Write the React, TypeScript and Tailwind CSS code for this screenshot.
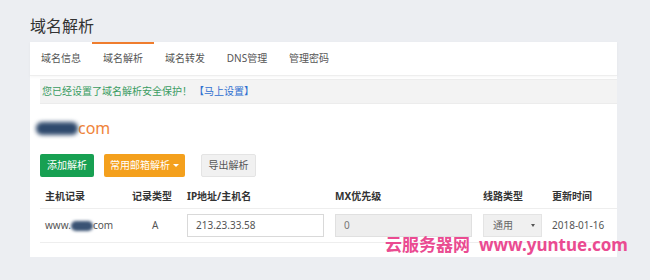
import React from "react";

const font = { fontFamily: '"Noto Sans", "Noto Sans CJK SC", sans-serif' };

const tabs = ["域名信息", "域名解析", "域名转发", "DNS管理", "管理密码"];

const Blur = ({ w }: { w: string }) => (
  <span className={`inline-block ${w} h-[10px] rounded-full bg-[#3a5374] blur-[1.5px] align-middle`}></span>
);

const App = () => {
  return (
    <div className="w-[650px] h-[280px] bg-[#eceef2] pl-[30px] pt-[15px] overflow-hidden" style={font}>
      <h1 className="text-[16px] leading-[22px] text-[#333] h-[27px]">域名解析</h1>

      <div className="relative w-[587px] bg-white pb-[14px]">
        {/* tabs */}
        <div className="flex h-[34px] border-b border-[#eeeeee] shadow-[0_1px_3px_rgba(0,0,0,0.04)]">
          {tabs.map((t, i) => (
            <div
              key={t}
              className={
                "w-[62px] flex items-center justify-center text-[10px] text-[#555] " +
                (i === 1 ? "border-t-2 border-[#ef7d2e] pb-[2px]" : "")
              }
            >
              {t}
            </div>
          ))}
        </div>

        {/* alert */}
        <div className="ml-[10px] mt-[3px] h-[25px] bg-[#f3f3f3] border-y border-[#ececec] flex items-center pl-[2px] text-[10px]">
          <span className="text-[#3a9c62]">您已经设置了域名解析安全保护！</span>
          <span className="text-[#2f6fd0] ml-[2px]">【马上设置】</span>
        </div>

        {/* domain */}
        <div className="ml-[6px] mt-[14px] h-[20px] flex items-center">
          <span className="inline-block w-[42px] h-[13px] rounded-[6px] bg-[#2f4a6d] blur-[2px]"></span>
          <span className="text-[16px] leading-[20px] text-[#f0843a]">com</span>
        </div>

        {/* buttons */}
        <div className="ml-[10px] mt-[16px] flex items-center text-[10px]">
          <button className="w-[54px] h-[23px] bg-[#17a052] text-white rounded-[2px]">添加解析</button>
          <button className="ml-[10px] w-[81px] h-[23px] bg-[#f4a01d] text-white rounded-[2px] flex items-center justify-center gap-[3px]">
            常用邮箱解析
            <span className="inline-block w-0 h-0 border-x-[3px] border-x-transparent border-t-[3px] border-t-white"></span>
          </button>
          <button className="ml-[16px] w-[55px] h-[23px] bg-[#f1f1f1] border border-[#e4e4e4] text-[#555] rounded-[2px]">导出解析</button>
        </div>

        {/* table */}
        <div className="ml-[10px] mt-[8px] text-[10px] text-[#555]">
          <div className="grid grid-cols-[87px_55px_148px_148px_69px_1fr] h-[24px] items-center pl-[5px] font-bold text-[#333] border-b border-[#eeeeee]">
            <div>主机记录</div>
            <div>记录类型</div>
            <div>IP地址/主机名</div>
            <div>MX优先级</div>
            <div>线路类型</div>
            <div>更新时间</div>
          </div>
          <div className="grid grid-cols-[87px_55px_148px_148px_69px_1fr] h-[34px] items-center pl-[5px] border-b border-[#eeeeee]">
            <div className="flex items-center">
              www.<Blur w="w-[22px]" />com
            </div>
            <div className="pl-[20px]">A</div>
            <div>
              <div className="w-[137px] h-[23px] border border-[#d9d9d9] bg-white flex items-center pl-[8px]">213.23.33.58</div>
            </div>
            <div>
              <div className="w-[137px] h-[23px] border border-[#e0e0e0] bg-[#eeeeee] flex items-center pl-[8px] text-[#777]">0</div>
            </div>
            <div>
              <div className="w-[59px] h-[23px] border border-[#e4e4e4] bg-[#f0f0f0] flex items-center justify-between pl-[9px] pr-[6px] text-[#666]">
                通用
                <span className="inline-block w-0 h-0 border-x-[2.5px] border-x-transparent border-t-[3px] border-t-[#555]"></span>
              </div>
            </div>
            <div>2018-01-16</div>
          </div>
        </div>

        {/* watermark */}
        <div className="absolute left-[355px] top-[194px] flex items-baseline font-bold text-[#ea4b91] whitespace-nowrap">
          <span className="text-[17px] leading-[18px]">云服务器网</span>
          <span className="ml-[9px] text-[17px] leading-[18px]" style={{ fontFamily: '"Noto Sans", sans-serif' }}>www.yuntue.com</span>
        </div>
      </div>
    </div>
  );
};

export default App;
